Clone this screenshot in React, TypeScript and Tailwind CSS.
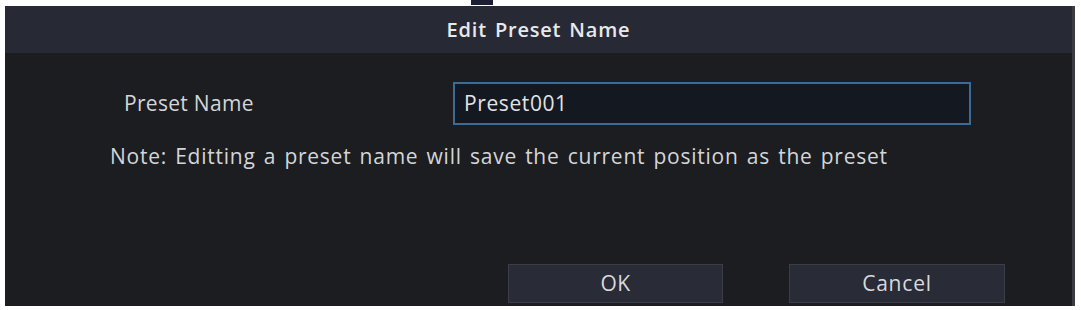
export default function App() {
  return (
    <div className="w-[1081px] h-[310px] bg-white relative overflow-hidden" style={{ fontFamily: '"Open Sans", "Noto Sans", sans-serif' }}>
      <div className="absolute left-[471px] top-0 w-[22px] h-[5px] bg-[#1c1e33]" />
      <div className="pt-[6px] pl-[5px]">
        <div className="w-[1070px] h-[300px] flex flex-col bg-[#1b1d21] border-r-[3px] border-[#3a3c42]">
          <div className="h-[47px] bg-[#272a35] flex items-center justify-center">
            <span className="text-[20px] font-semibold text-[#e8e8ea] tracking-[0.8px] [word-spacing:2px]">Edit Preset Name</span>
          </div>
          <div className="flex flex-col">
            <div className="flex items-center mt-[29px] h-[43px]">
              <span className="ml-[119px] w-[329px] text-[21px] text-[#d4d5d8] tracking-[0.3px]">Preset Name</span>
              <div className="w-[518px] h-[43px] border-2 border-[#3d6b98] bg-[#131821] flex items-center px-[9px]">
                <span className="text-[21px] text-[#e2e3e6] tracking-[0.6px]">Preset001</span>
              </div>
            </div>
            <div className="ml-[105px] mt-[17px] text-[21px] leading-[28px] text-[#d4d5d8] tracking-[0.75px] [word-spacing:2px]">
              Note: Editting a preset name will save the current position as the preset
            </div>
          </div>
          <div className="flex-1" />
          <div className="flex gap-[66px] ml-[503px] mb-[3px]">
            <button className="w-[215px] h-[39px] bg-[#292b36] border border-[#3b3d48] text-[21px] text-[#d8d9dc] tracking-[0.5px]">OK</button>
            <button className="w-[216px] h-[39px] bg-[#292b36] border border-[#3b3d48] text-[21px] text-[#d8d9dc] tracking-[0.8px]">Cancel</button>
          </div>
        </div>
      </div>
    </div>
  );
}
